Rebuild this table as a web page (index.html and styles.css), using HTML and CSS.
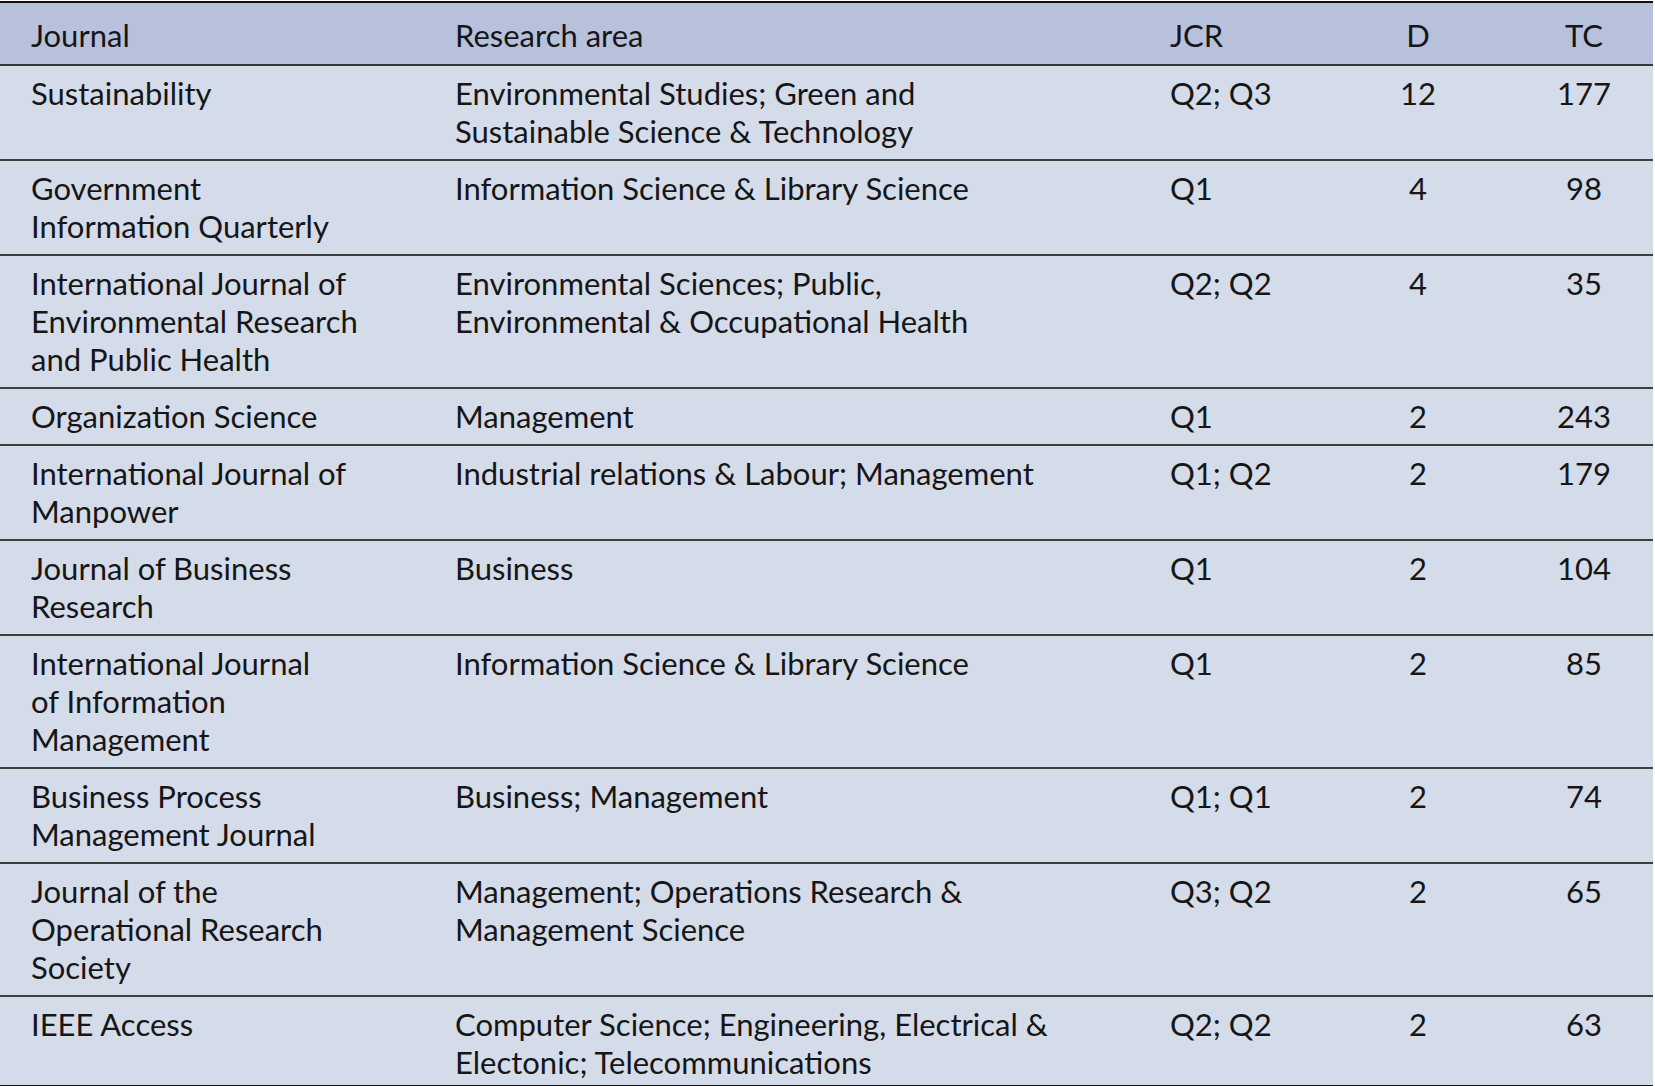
FILE: index.html
```html
<!DOCTYPE html>
<html>
<head>
<meta charset="utf-8">
<link rel="stylesheet" href="styles.css">
</head>
<body>
<table class="jt">
  <colgroup>
    <col class="c1"><col class="c2"><col class="c3"><col class="c4"><col class="c5">
  </colgroup>
  <thead>
    <tr><th>Journal</th><th>Research area</th><th>JCR</th><th class="num">D</th><th class="num tc">TC</th></tr>
  </thead>
  <tbody>
    <tr><td>Sustainability</td><td>Environmental Studies; Green and<br>Sustainable Science &amp; Technology</td><td>Q2; Q3</td><td class="num">12</td><td class="num tc">177</td></tr>
    <tr><td>Government<br>Information Quarterly</td><td>Information Science &amp; Library Science</td><td>Q1</td><td class="num">4</td><td class="num tc">98</td></tr>
    <tr><td>International Journal of<br>Environmental Research<br>and Public Health</td><td>Environmental Sciences; Public,<br>Environmental &amp; Occupational Health</td><td>Q2; Q2</td><td class="num">4</td><td class="num tc">35</td></tr>
    <tr><td>Organization Science</td><td>Management</td><td>Q1</td><td class="num">2</td><td class="num tc">243</td></tr>
    <tr><td>International Journal of<br>Manpower</td><td>Industrial relations &amp; Labour; Management</td><td>Q1; Q2</td><td class="num">2</td><td class="num tc">179</td></tr>
    <tr><td>Journal of Business<br>Research</td><td>Business</td><td>Q1</td><td class="num">2</td><td class="num tc">104</td></tr>
    <tr><td>International Journal<br>of Information<br>Management</td><td>Information Science &amp; Library Science</td><td>Q1</td><td class="num">2</td><td class="num tc">85</td></tr>
    <tr><td>Business Process<br>Management Journal</td><td>Business; Management</td><td>Q1; Q1</td><td class="num">2</td><td class="num tc">74</td></tr>
    <tr><td>Journal of the<br>Operational Research<br>Society</td><td>Management; Operations Research &amp;<br>Management Science</td><td>Q3; Q2</td><td class="num">2</td><td class="num tc">65</td></tr>
    <tr class="last"><td>IEEE Access</td><td>Computer Science; Engineering, Electrical &amp;<br>Electonic; Telecommunications</td><td>Q2; Q2</td><td class="num">2</td><td class="num tc">63</td></tr>
  </tbody>
</table>
</body>
</html>
```
FILE: styles.css
```css
html, body {
  margin: 0;
  padding: 0;
  background: #ffffff;
}
body {
  font-family: Lato, "Noto Sans", sans-serif;
  color: #161616;
}
.jt {
  width: 1653px;
  border-collapse: collapse;
  table-layout: fixed;
  margin-top: 1px;
  font-size: 31px;
  line-height: 38px;
}
.c1 { width: 424px; }
.c2 { width: 715px; }
.c3 { width: 200px; }
.c4 { width: 158px; }
.c5 { width: 156px; }
.jt thead tr {
  background: #b8c1dc;
  border-top: 2px solid #111111;
  border-bottom: 2px solid #383838;
}
.jt th {
  font-weight: normal;
  text-align: left;
  vertical-align: top;
  padding: 13px 0 10px 31px;
}
.jt tbody tr {
  background: #d4dbe9;
  border-bottom: 2px solid #3e3e3e;
}
.jt tbody tr.last {
  border-bottom: 2px solid #111111;
}
.jt td {
  vertical-align: top;
  padding: 8px 0 9px 31px;
}
.jt tr.last td {
  padding-bottom: 4px;
}
.jt .num {
  text-align: center;
  padding-left: 0;
}
.jt .tc {
  padding-left: 18px;
}
```
